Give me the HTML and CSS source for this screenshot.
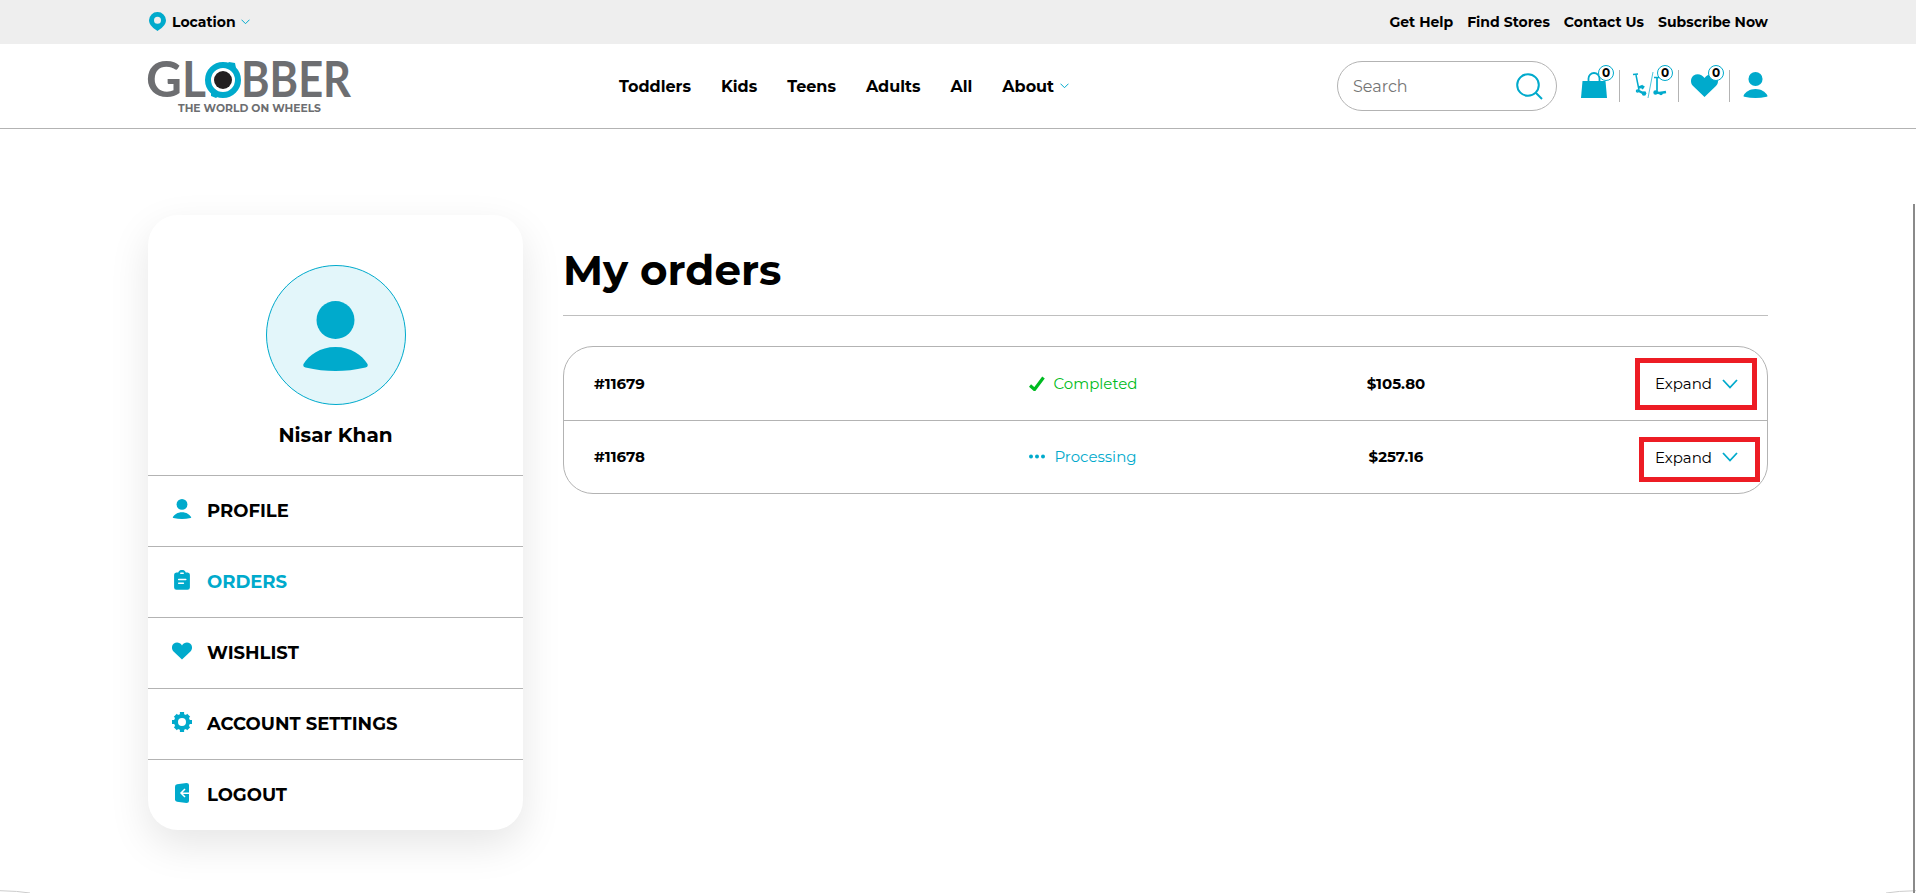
FILE: index.html
```html
<!DOCTYPE html>
<html lang="en">
<head>
    <meta charset="UTF-8">
    <meta name="viewport" content="width=device-width, initial-scale=1.0">
    <title>My orders</title>
    <link rel="stylesheet" href="styles.css">
</head>
<body>
    <svg class="sprite" width="0" height="0">
        <symbol id="user" viewBox="0 0 65 70">
            <circle cx="32.5" cy="19" r="19"/>
            <path d="M32.5 46C48 46 59 54 64.500 63Q65.500 66 62.500 66.500Q47 70 32.500 70T2.500 66.500Q-.5 66 .5 63C6 54 17 46 32.500 46Z"/>
        </symbol>
        <symbol id="heart" viewBox="0 0 26 22">
            <path d="M13 22 2 11.500C-1 8.500-.5 3.500 2.500 1.300 6-1 10.500 0 13 3.700 15.500 0 20-1 23.500 1.300 26.500 3.500 27 8.500 24 11.500Z"/>
        </symbol>
        <symbol id="chevron" viewBox="0 0 16 10">
            <path d="M1 1l7 7.500L15 1" fill="none" stroke="currentColor" stroke-width="1.800"/>
        </symbol>
    </svg>

    <div class="topbar">
        <div class="location">
            <svg class="pin" viewBox="0 0 17 19"><path fill-rule="evenodd" d="M8.500 0A8.400 8.400 0 0 1 17 8.300C17 13 12 17 8.500 19 5 17 0 13 0 8.300A8.400 8.400 0 0 1 8.500 0ZM8.500 4.800a3.500 3.500 0 1 0 0 7 3.500 3.500 0 0 0 0-7Z"/></svg>
            <span>Location</span>
            <svg class="chevron-small" viewBox="0 0 9 6"><path d="M.5.7l4 4 4-4"/></svg>
        </div>
        <div class="top-links">
            <a>Get Help</a>
            <a>Find Stores</a>
            <a>Contact Us</a>
            <a>Subscribe Now</a>
        </div>
    </div>

    <header class="header">
        <svg class="logo" viewBox="0 0 204 52">
            <text class="logo-text" x="-2" y="36" textLength="36" lengthAdjust="spacingAndGlyphs">G</text>
            <text class="logo-text" x="34" y="36" textLength="24" lengthAdjust="spacingAndGlyphs">L</text>
            <text class="logo-text" x="93" y="36" textLength="110" lengthAdjust="spacingAndGlyphs">BBER</text>
            <circle cx="75" cy="19" r="15" fill="#fff" stroke="#00aacc" stroke-width="6"/>
            <path d="M78 4l3-3 6 1 1 5M72 34l-4 3-5-2 0-5" fill="#00aacc"/>
            <circle cx="75" cy="19" r="9" fill="#231f20"/>
            <text class="logo-tag" x="30" y="50.500" textLength="143" lengthAdjust="spacingAndGlyphs">THE WORLD ON WHEELS</text>
        </svg>
        <nav class="nav">
            <a>Toddlers</a>
            <a>Kids</a>
            <a>Teens</a>
            <a>Adults</a>
            <a>All</a>
            <a>About</a>
            <svg class="chevron-small" viewBox="0 0 9 6"><path d="M.5.7l4 4 4-4"/></svg>
        </nav>
        <div class="search">
            <span>Search</span>
            <svg viewBox="0 0 27 27"><circle cx="12" cy="12" r="10.800"/><path d="M19.500 19.500l6.500 6.500"/></svg>
        </div>
        <div class="tools">
            <a class="tool bag">
                <svg viewBox="0 0 26 26"><path d="M1.500 9h23L26 26H0Z"/><path d="M7.500 10V6.500a5.500 5.500 0 0 1 11 0V10" fill="none" stroke="currentColor" stroke-width="1.800"/></svg>
                <span class="badge">0</span>
            </a>
            <a class="tool compare">
                <svg viewBox="0 0 36 26" fill="none" stroke="currentColor">
                    <path d="M1 2.500l5-.5M4 3l3 15" stroke-width="1.500"/>
                    <path d="M6 18.500l6 3 2-1M7 15.500l4-1.500" stroke-width="2.500"/>
                    <path d="M10 17l2-3" stroke-width="2"/>
                    <circle cx="12" cy="21.500" r="1.300" stroke-width="1.800"/>
                    <circle cx="5.500" cy="19" r="1" stroke-width="1.500"/>
                    <path d="M21 0l-5 26" stroke-width=".7"/>
                    <path d="M22 5.500h6M25 5v15" stroke-width="1.700"/>
                    <path d="M23 20.500l5 .5 6-1" stroke-width="2.500"/>
                    <circle cx="23.500" cy="20.500" r="1.300" stroke-width="1.800"/>
                    <circle cx="29" cy="21.500" r="1" stroke-width="1.500"/>
                </svg>
                <span class="badge">0</span>
            </a>
            <a class="tool wish">
                <svg><use href="#heart"/></svg>
                <span class="badge">0</span>
            </a>
            <a class="tool account"><svg><use href="#user"/></svg></a>
        </div>
    </header>

    <main class="main">
        <aside class="card">
            <div class="card-head">
                <div class="avatar"><svg><use href="#user"/></svg></div>
                <div class="name">Nisar Khan</div>
            </div>
            <a class="item"><svg><use href="#user"/></svg><span>PROFILE</span></a>
            <a class="item active">
                <svg viewBox="0 0 20 21"><path d="M4 2.500h2C7 .5 8 0 10 0s3 .5 4 2.500h2A2.500 2.500 0 0 1 18.300 5v13.300A2.500 2.500 0 0 1 15.800 20.800H4.200A2.500 2.500 0 0 1 1.700 18.300V5A2.500 2.500 0 0 1 4 2.500Z"/><path d="M8.700 3.500h2.600M6.500 10h7.500M6.500 14h5" stroke="#fff" stroke-width="1.500" stroke-linecap="round"/></svg>
                <span>ORDERS</span>
            </a>
            <a class="item"><svg><use href="#heart"/></svg><span>WISHLIST</span></a>
            <a class="item">
                <svg viewBox="-10 -10 20 20"><circle r="6" fill="none" stroke="currentColor" stroke-width="4"/><path d="M0-10V-6M0 10V6M-10 0H-6M10 0H6M-6.700-6.700l2.500 2.500M6.700 6.700 4.200 4.200M-6.700 6.700l2.500-2.500M6.700-6.700 4.200-4.200" stroke="currentColor" stroke-width="4.200"/></svg>
                <span>ACCOUNT SETTINGS</span>
            </a>
            <a class="item">
                <svg viewBox="0 0 20 20"><path d="M5 1.200 14.500 0Q17 0 17 2V18Q17 20 14.500 20L5 18.800Q3 18.300 3 16.500V3.500Q3 1.700 5 1.200Z"/><path d="M13 6l-4 4 4 4M9 10.200h8.500" fill="none" stroke="#fff" stroke-width="1.500"/></svg>
                <span>LOGOUT</span>
            </a>
        </aside>

        <section class="content">
            <h1>My orders</h1>
            <div class="order-list">
                <div class="order">
                    <div class="order-id">#11679</div>
                    <div class="status completed">
                        <svg viewBox="0 0 16 15"><path d="M1 9.500l4.500 4L14.500 1.500" fill="none" stroke="currentColor" stroke-width="3.200"/></svg>
                        <span>Completed</span>
                    </div>
                    <div class="price">$105.80</div>
                    <div class="expand">
                        <span>Expand</span>
                        <svg><use href="#chevron"/></svg>
                        <i class="mark"></i>
                    </div>
                </div>
                <div class="order">
                    <div class="order-id">#11678</div>
                    <div class="status processing">
                        <svg viewBox="0 0 16 4"><circle cx="2" cy="2" r="2"/><circle cx="8" cy="2" r="2"/><circle cx="14" cy="2" r="2"/></svg>
                        <span>Processing</span>
                    </div>
                    <div class="price">$257.16</div>
                    <div class="expand">
                        <span>Expand</span>
                        <svg><use href="#chevron"/></svg>
                        <i class="mark"></i>
                    </div>
                </div>
            </div>
        </section>
    </main>

    <svg class="footer-edge" viewBox="0 0 1916 3"><path d="M0 .7Q18 1 30 3M1886 3Q1898 1 1916 .7"/></svg>
    <div class="page-edge"></div>
</body>
</html>
```
FILE: styles.css
```css
* {
    box-sizing: border-box;
}
body {
    margin: 0;
    height: 893px;
    overflow: hidden;
    position: relative;
    display: flex;
    flex-direction: column;
    font-family: Montserrat, Inter, sans-serif;
    font-size: 16px;
    font-weight: 700;
    color: #000;
    background-color: #fff;
}
svg {
    display: block;
    fill: currentColor;
    flex: none;
}
.sprite {
    position: absolute;
}

/* top bar */
.topbar {
    height: 44px;
    flex: none;
    padding: 0 148px 1px;
    background-color: #eee;
    display: flex;
    justify-content: space-between;
    align-items: center;
    font-size: 14px;
}
.location {
    display: flex;
    align-items: center;
}
.pin {
    width: 19px;
    height: 19px;
    margin-right: 5px;
    color: #00aacc;
}
.chevron-small {
    width: 9px;
    height: 6px;
    margin-left: 5px;
    fill: none;
    stroke: #00aacc;
}
.top-links {
    display: flex;
    gap: 14px;
}

/* header */
.header {
    height: 85px;
    flex: none;
    padding: 0 148px;
    border-bottom: 1px solid #b3b3b3;
    display: flex;
    align-items: center;
}
.logo {
    width: 204px;
    height: 52px;
    margin-top: 2px;
    overflow: visible;
}
.logo-text {
    font: 700 49px Lato, sans-serif;
    fill: #6d6e71;
}
.logo-tag {
    font: 700 11px Montserrat, Inter, sans-serif;
    fill: #6d6e71;
}
.nav {
    display: flex;
    align-items: center;
    gap: 30px;
    margin-left: 267px;
}
.nav .chevron-small {
    margin-left: -24px;
}
.search {
    width: 220px;
    height: 50px;
    margin-left: auto;
    padding: 0 13px 0 15px;
    border: 1px solid #b3b3b3;
    border-radius: 25px;
    display: flex;
    justify-content: space-between;
    align-items: center;
    font-size: 16px;
    font-weight: 400;
    color: #757575;
}
.search svg {
    width: 27px;
    height: 27px;
    fill: none;
    stroke: #00aacc;
    stroke-width: 2;
}
.tools {
    display: flex;
    margin-left: 14px;
    color: #00aacc;
}
.tool {
    position: relative;
    height: 32px;
    display: flex;
    align-items: center;
    border-left: 1px solid #b3b3b3;
}
.bag {
    width: 48px;
    padding-left: 10px;
    border-left: none;
}
.bag svg {
    width: 26px;
    height: 26px;
    margin-top: -2px;
}
.compare {
    width: 59px;
    padding-left: 12px;
}
.compare svg {
    width: 36px;
    height: 26px;
    margin-top: -2px;
    fill: none;
}
.wish {
    width: 51px;
    padding-left: 12px;
}
.wish svg {
    width: 27px;
    height: 23px;
    margin-top: -2px;
}
.account {
    padding-left: 13px;
}
.account svg {
    width: 25px;
    height: 26px;
    margin-top: -2px;
}
.badge {
    position: absolute;
    top: -5px;
    right: 5px;
    width: 16px;
    height: 16px;
    border: 1px solid #00aacc;
    border-radius: 50%;
    background-color: #fff;
    color: #000;
    font-size: 12px;
    line-height: 14px;
    text-align: center;
}

/* account page */
.main {
    flex: 1;
    padding: 86px 148px 0;
    display: flex;
    align-items: flex-start;
    gap: 40px;
}
.card {
    width: 375px;
    border-radius: 30px;
    background-color: #fff;
    box-shadow: 0 15px 40px rgba(0, 0, 0, 0.1);
}
.card-head {
    height: 260px;
    padding-top: 50px;
}
.avatar {
    width: 140px;
    height: 140px;
    margin: 0 auto 18px;
    padding-top: 2px;
    border: 1px solid #00aacc;
    border-radius: 50%;
    background-color: #e3f6fa;
    color: #00aacc;
    display: flex;
    justify-content: center;
    align-items: center;
}
.avatar svg {
    width: 65px;
    height: 70px;
}
.name {
    font-size: 20px;
    line-height: 24px;
    text-align: center;
}
.item {
    height: 71px;
    padding-left: 24px;
    border-top: 1px solid #b3b3b3;
    display: flex;
    align-items: center;
    font-size: 18px;
}
.item svg {
    width: 20px;
    height: 20px;
    margin: -4px 15px 0 0;
    color: #00aacc;
}
.active {
    color: #00aacc;
}

.content {
    flex: 1;
}
h1 {
    margin: 0 0 30px;
    height: 101px;
    padding-top: 30px;
    border-bottom: 1px solid #bfbfbf;
    font-size: 42px;
    line-height: 50px;
}
.order-list {
    border: 1px solid #b3b3b3;
    border-radius: 30px;
    font-size: 15px;
}
.order {
    height: 73px;
    padding: 0 29px 0 30px;
    display: grid;
    grid-template-columns: 333px 312px 314px 1fr;
    align-items: center;
}
.order + .order {
    border-top: 1px solid #b3b3b3;
}
.order + .order .order-id,
.order + .order .status,
.order + .order .price {
    padding-bottom: 2px;
}
.status {
    display: flex;
    justify-content: center;
    align-items: center;
    gap: 9px;
    font-weight: 400;
}
.status svg {
    width: 16px;
    height: 15px;
}
.completed {
    color: #00bb22;
}
.processing {
    color: #00aacc;
}
.price {
    text-align: center;
}
.expand {
    position: relative;
    height: 100%;
    display: flex;
    justify-content: flex-end;
    align-items: center;
    gap: 10px;
    font-weight: 400;
}
.expand svg {
    width: 16px;
    height: 10px;
    color: #00aacc;
}
/* highlight frames lie over the expand links */
.mark {
    position: absolute;
    top: 11px;
    right: -19px;
    width: 122px;
    height: 52px;
    border: 5px solid #ed1c24;
}
.order + .order .mark {
    top: 16px;
    right: -22px;
    width: 121px;
    height: 45px;
}

.footer-edge {
    width: 1916px;
    height: 3px;
    fill: none;
    stroke: #ccc;
}
.page-edge {
    position: absolute;
    top: 204px;
    right: 1px;
    bottom: 0;
    width: 2px;
    background-color: #8a8a8a;
}
```
